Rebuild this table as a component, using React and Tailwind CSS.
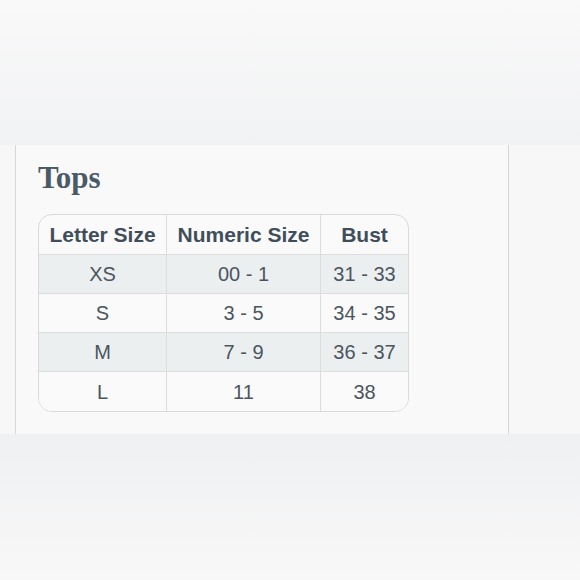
const rows = [
  ['XS', '00 - 1', '31 - 33'],
  ['S', '3 - 5', '34 - 35'],
  ['M', '7 - 9', '36 - 37'],
  ['L', '11', '38'],
]

const headers = ['Letter Size', 'Numeric Size', 'Bust']

export default function App() {
  return (
    <div className="w-[580px] h-[580px] flex flex-col bg-[#f7f7f8] font-['Liberation_Sans',Arial,sans-serif]">
      <div className="h-[145px] bg-gradient-to-b from-[#f9f9fa] to-[#f1f2f3]" />

      <div className="h-[289px] ml-[15px] w-[494px] border-l border-r border-[#d6d6d6] bg-[#f9f9f9] pl-[22px] pt-[18px]">
        <h2 className="font-['Liberation_Serif',Georgia,serif] font-bold text-[31px] leading-[30px] text-[#4a5a67]">
          Tops
        </h2>

        <div className="mt-[21px] w-[371px] rounded-[14px] border border-[#d9d9d9] overflow-hidden bg-[#fafafa]">
          <div className="grid grid-cols-[128px_154px_1fr] h-[40px] border-b border-[#dcdcdc]">
            {headers.map((h, i) => (
              <div
                key={h}
                className={`flex items-center justify-center text-[21px] font-bold text-[#3f4e5a] ${i < 2 ? 'border-r border-[#dcdcdc]' : ''}`}
              >
                {h}
              </div>
            ))}
          </div>

          {rows.map((r, ri) => (
            <div
              key={r[0]}
              className={`grid grid-cols-[128px_154px_1fr] h-[39px] ${ri % 2 === 0 ? 'bg-[#ebeff0]' : 'bg-[#fafafa]'} ${ri < rows.length - 1 ? 'border-b border-[#dcdcdc]' : ''}`}
            >
              {r.map((c, i) => (
                <div
                  key={i}
                  className={`flex items-center justify-center text-[20px] text-[#4b5560] ${i < 2 ? 'border-r border-[#dcdcdc]' : ''}`}
                >
                  {c}
                </div>
              ))}
            </div>
          ))}
        </div>
      </div>

      <div className="flex-1 bg-gradient-to-b from-[#eff0f1] to-[#f8f8f9]" />
    </div>
  )
}
